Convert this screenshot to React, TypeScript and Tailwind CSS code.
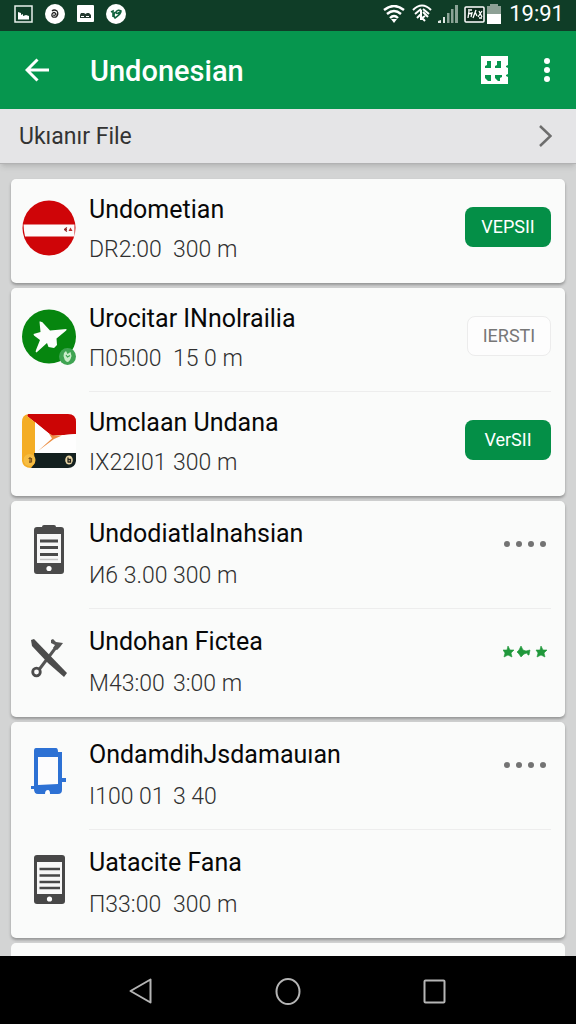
import React from 'react';
import clsx from 'clsx';

interface Row {
  title: string;
  date: string;
  size: string;
  icon: React.ReactNode;
  action?: React.ReactNode;
}

interface Group {
  roomy?: boolean;
  rows: Row[];
}

function RedBadgeIcon() {
  return (
    <svg viewBox="0 0 54 56" className="w-[54px] h-[56px]">
      <ellipse cx="27" cy="28" rx="26.500" ry="27.500" fill="#cf0508" />
      <path d="M1.500 24.500H52.500V36.500H3Q1.500 30 1.500 24.500Z" fill="#fdfbfb" />
      <path d="M45 27.500Q41 29.500 45 31.500M45 29.500H42" stroke="#8f2a2a" strokeWidth="1.300" fill="none" />
      <path d="M46.500 31L48.500 27.500L50.500 31Z" fill="#c02c2c" />
    </svg>
  );
}

function GreenStarIcon() {
  return (
    <svg viewBox="0 0 54 56" className="w-[54px] h-[56px]">
      <circle cx="27" cy="27.500" r="27" fill="#06860f" />
      <path
        d="M17.500 12.500Q20.500 12 22 15L28 21.500L44.500 20Q45 21 43 22.500L34.500 29.500L35 36L32 39L26.500 38L25 34L14.500 43.500Q13 43 14 41L18 31L12 26.500L11.500 25L18.500 23Z"
        fill="#fcfdfc"
      />
      <circle cx="45.500" cy="47.500" r="8.500" fill="#3fa452" />
      <path d="M42 44L44 42L45.500 45L48.500 43L49.500 47Q48 53 45 53Q42 51 41.500 47Z" fill="#c9ecc9" />
      <path d="M44 46L45.500 48L48 46.500" stroke="#3fa452" strokeWidth="1.200" fill="none" />
    </svg>
  );
}

function FlagIcon() {
  return (
    <svg viewBox="0 0 54 54" className="w-[54px] h-[54px]">
      <path d="M6 0H46Q54 0 54 8V20L30 22L5 2Z" fill="#cc0505" />
      <path d="M6 0Q0 1 0 8V47Q1 54 9 54L14 50V9L5 2Z" fill="#f4ad25" />
      <path d="M13 8L30 22L54 20V39H13Z" fill="#fefefe" />
      <path d="M27 19.500L31 21.500L40 21.500L32 25L16 37L30 24.500Z" fill="#ec8f45" />
      <path d="M12 39H54V47Q53 54 46 54H9L13 49Z" fill="#13201f" />
      <circle cx="7.500" cy="46" r="6" fill="#f6bd43" />
      <path d="M8 43V49M6.500 44.500H9.500V48H7" stroke="#80551b" strokeWidth="1.200" fill="none" />
      <ellipse cx="47" cy="46" rx="3.800" ry="4.500" fill="#e9d6a5" />
      <path d="M46 43.500V48.500M46 45.500H48.500V48H46" stroke="#24231c" strokeWidth="1.300" fill="none" />
    </svg>
  );
}

function ClipboardPhoneIcon() {
  return (
    <svg viewBox="0 0 30 50" className="w-[30px] h-[50px]">
      <path d="M8 2Q8 0 10 0H20Q22 0 22 2H27Q30 2 30 5V46Q30 49 27 49H3Q0 49 0 46V5Q0 2 3 2Z" fill="#4a4a4a" />
      <path d="M3 9H27V38H3Z" fill="#f7f7f7" />
      <path d="M6 16H24M6 22.500H24M6 29.500H24" stroke="#4a4a4a" strokeWidth="2.800" />
      <path d="M6 34.500H24" stroke="#c4c4c4" strokeWidth="1.500" />
      <circle cx="15" cy="43.500" r="2.600" fill="#fff" />
    </svg>
  );
}

function PhoneIcon() {
  return (
    <svg viewBox="0 0 31 49" className="w-[31px] h-[49px]">
      <rect width="31" height="49" rx="3" fill="#474747" />
      <path d="M3 7H28V39H3Z" fill="#f7f7f7" />
      <path d="M5.500 14H26M5.500 20.500H26M5.500 27H26M5.500 33H26" stroke="#474747" strokeWidth="2.700" />
      <circle cx="15.500" cy="44" r="2.600" fill="#fff" />
    </svg>
  );
}

function ToolsIcon() {
  return (
    <svg viewBox="0 0 36 40" className="w-9 h-10">
      <path d="M7 33L26 8" stroke="#555" strokeWidth="3" />
      <circle cx="5.500" cy="34" r="3.800" stroke="#4c4c4c" strokeWidth="2.800" fill="#fafafa" />
      <path d="M20 2L22 1L25 4L32 5L29 9L26 12L22 10L24 7L20 5Z" fill="#555" />
      <path d="M0 2L3 1L36 35L33 39L17 25L1 8Z" fill="#4c4c4c" />
    </svg>
  );
}

function TabletIcon() {
  return (
    <svg viewBox="0 0 36 46" className="w-9 h-[46px]">
      <path
        d="M5 0H25Q27 0 27 4H31V30H35V34H31V42Q31 46 27 46H7Q3 46 3 41H0V38H3V3Q3 0 5 0Z"
        fill="#2d71d4"
      />
      <path d="M7 9H27V36L7 37Z" fill="#fcfcfd" />
      <path d="M14 46Q14 42 17 42Q19 42 19 46Z" fill="#fff" />
    </svg>
  );
}

function VersionButton({ label, outlined }: { label: string; outlined?: boolean }) {
  return (
    <button
      className={clsx(
        'h-10 rounded-lg text-lg flex items-center justify-center',
        outlined ? 'w-[84px] bg-[#fdfdfd] border border-[#ececec] text-[#777]' : 'w-[86px] bg-[#048f47] text-white'
      )}
    >
      {label}
    </button>
  );
}

function DotsButton({ label }: { label: string }) {
  return (
    <button aria-label={label} className="h-10 pr-[5px] flex items-center gap-[6px]">
      <span className="w-[6px] h-[6px] rounded-full bg-[#737373]" />
      <span className="w-[6px] h-[6px] rounded-full bg-[#737373]" />
      <span className="w-[6px] h-[6px] rounded-full bg-[#737373]" />
      <span className="w-[6px] h-[6px] rounded-full bg-[#737373]" />
    </button>
  );
}

function StarsButton() {
  return (
    <button aria-label="Rating" className="h-10 pr-1 flex items-center">
      <svg viewBox="0 0 44 12" className="w-11 h-3" fill="#20983b" stroke="#20983b" strokeWidth="0.600">
        <path d="M5 0L7 4L11 4L8 7L9 11L5 9L1 11L2 7L0 4L4 4Z" />
        <path d="M18 0L20 4L23 5L27 4L26 9H25L24 7L21 8L18 11L16 8L14 6L16 4Z" />
        <path d="M38 0L40 4L44 4L41 7L42 11L38 9L34 11L35 7L33 4L37 4Z" />
      </svg>
    </button>
  );
}

const GROUPS: Group[] = [
  {
    rows: [
      { title: 'Undometian', date: 'DR2:00', size: '300 m', icon: <RedBadgeIcon />, action: <VersionButton label="VEPSII" /> },
    ],
  },
  {
    rows: [
      { title: 'Urocitar INnolrailia', date: 'П05!00', size: '15 0 m', icon: <GreenStarIcon />, action: <VersionButton label="IERSTI" outlined /> },
      { title: 'Umclaan Undana', date: 'IX22I01', size: '300 m', icon: <FlagIcon />, action: <VersionButton label="VerSII" /> },
    ],
  },
  {
    roomy: true,
    rows: [
      { title: 'UndodiatlaInahsian', date: 'И6 3.00', size: '300 m', icon: <ClipboardPhoneIcon />, action: <DotsButton label="More about UndodiatlaInahsian" /> },
      { title: 'Undohan Fictea', date: 'M43:00', size: '3:00 m', icon: <ToolsIcon />, action: <StarsButton /> },
    ],
  },
  {
    roomy: true,
    rows: [
      { title: 'OndamdihJsdamauıan', date: 'I100 01', size: '3 40', icon: <TabletIcon />, action: <DotsButton label="More about OndamdihJsdamauıan" /> },
      { title: 'Uatacite Fana', date: 'П33:00', size: '300 m', icon: <PhoneIcon /> },
    ],
  },
];

function StatusBar() {
  return (
    <div className="h-[31px] shrink-0 bg-[#0f3d27] text-white flex items-center justify-between pl-[14px] pr-3 pb-1">
      <div className="flex items-center gap-3">
        <svg viewBox="0 0 19 18" className="w-[19px] h-[18px]">
          <rect x="1" y="1" width="17" height="16" fill="none" stroke="#e9f1ec" strokeWidth="1.500" />
          <path d="M4 7L7 8V10L9 9V11L12 10L15 11V14.500H4Z" fill="#fff" />
        </svg>
        <svg viewBox="0 0 20 20" className="w-5 h-5">
          <circle cx="10" cy="10" r="10" fill="#fff" />
          <path d="M7 7Q9 5 12 7Q14 10 11 13Q6 14 7 10Q9 7 11 10Q10 12 8 11" fill="none" stroke="#222" strokeWidth="1.300" />
        </svg>
        <svg viewBox="0 0 17 17" className="w-[17px] h-[17px]">
          <rect width="17" height="17" rx="1" fill="#fff" />
          <path d="M3 13V10L4 8H7L8.500 9L10 8H12L14 10V13Z" fill="#253a30" />
          <path d="M4 11.500H7M9 11.500H12" stroke="#fff" strokeWidth="1" />
        </svg>
        <svg viewBox="0 0 20 20" className="w-5 h-5">
          <circle cx="10" cy="10" r="10" fill="#fff" />
          <path d="M5 8L7 7V13M9 8Q7 12 9 14Q15 10 15 7Q12 5 10 8Q10 11 14 8" fill="none" stroke="#12633f" strokeWidth="1.600" />
        </svg>
      </div>
      <div className="flex items-center">
        <svg viewBox="0 0 22 18" className="w-[22px] h-[18px] mr-[7px]" fill="none" stroke="#fff" strokeWidth="2.400">
          <path d="M1 5Q11 -3 21 5M4 9Q11 3 18 9M7 13Q11 9 15 13" />
          <path d="M8 14L11 18L14 14Z" fill="#fff" stroke="none" />
        </svg>
        <svg viewBox="0 0 20 19" className="w-5 h-[19px] mr-[5px]" fill="none" stroke="#fff" strokeWidth="2">
          <path d="M1 6Q10 -3 19 6M3 10L9 5M11 5L17 10M5 14L9 10M9 6V16M11 8L16 13M13 12L10 14L13 17" />
        </svg>
        <svg viewBox="0 0 21 19" className="w-[21px] h-[19px] mr-[6px]">
          <path d="M1 19V17L4 16V19ZM6 19V13H8V19Z" fill="#dfe8e3" />
          <path d="M10 19V9H12.500V19ZM14 19V5H16.500V19ZM18 19V1H21V19Z" fill="#8ba396" />
        </svg>
        <svg viewBox="0 0 38 20" className="w-[38px] h-5 mr-[7px]">
          <rect x="1" y="3" width="19" height="15" rx="1" fill="#0c2b1c" stroke="#fff" strokeWidth="1.500" />
          <path d="M4 6H8M5 7L4 14M4 10L8 9L7 13M12 6L9 14M11 8L13 12M18 7L14 13M15 7L18 13M15 14H18" stroke="#fff" strokeWidth="1.300" fill="none" />
          <path d="M23 2H26V0H34V2H37V10H23Z" fill="#8da095" />
          <path d="M23 10H37V20H23Z" fill="#fff" />
        </svg>
        <span className="text-[22px] leading-6">19:91</span>
      </div>
    </div>
  );
}

function AppBar() {
  return (
    <header className="h-[78px] shrink-0 bg-[#06964e] text-white flex items-center pl-[25px] pr-[26px]">
      <button aria-label="Back" className="mr-10">
        <svg viewBox="0 0 25 24" className="w-[25px] h-6" fill="none" stroke="currentColor" strokeWidth="3">
          <path d="M24 12H2M12.500 1.500L2 12L12.500 22.500" />
        </svg>
      </button>
      <h1 className="flex-1 text-[29px] leading-8 pt-px font-medium">Undonesian</h1>
      <button aria-label="Grid view" className="mr-9">
        <svg viewBox="0 0 27 28" className="w-[27px] h-7">
          <path d="M0 0H27V9L25 10V11L27 12V18L25 19V20L27 21V28H0Z" fill="#fff" />
          <path
            d="M6 5H10V12H4V10L6 9ZM16 5H20V12H14V10L16 9ZM4 19H10V25H7L4 22ZM14 19H21V21L19 22V25H17L14 22Z"
            fill="#06964e"
          />
        </svg>
      </button>
      <button aria-label="Menu" className="flex flex-col gap-[3px]">
        <span className="w-[6px] h-[6px] rounded-full bg-white" />
        <span className="w-[6px] h-[6px] rounded-full bg-white" />
        <span className="w-[6px] h-[6px] rounded-full bg-white" />
      </button>
    </header>
  );
}

function ListRow({ row, roomy, last }: { row: Row; roomy?: boolean; last: boolean }) {
  return (
    <li className={clsx('flex items-start', roomy ? 'h-[108px]' : 'h-[104px]')}>
      <div className="w-[54px] h-[54px] mt-[22px] mr-[13px] shrink-0 flex items-center justify-center">{row.icon}</div>
      <div className={clsx('h-full flex-1 flex items-start justify-between', !last && 'border-b border-[#ededed]')}>
        <div className={clsx('flex flex-col', roomy ? 'pt-[17px] gap-[10px]' : 'pt-[15px] gap-2')}>
          <h2 className="text-[25px] leading-8 text-[#080808]">{row.title}</h2>
          <p className="flex text-[23px] leading-8 font-light text-[#303030]">
            <span className="w-[84px]">{row.date}</span>
            <span>{row.size}</span>
          </p>
        </div>
        {row.action && <div className={roomy ? 'pt-[23px]' : 'pt-7'}>{row.action}</div>}
      </div>
    </li>
  );
}

export default function App() {
  return (
    <div className="h-dvh flex flex-col overflow-hidden bg-[#d3d4d4] font-[Roboto,'Noto_Sans',sans-serif]">
      <StatusBar />
      <AppBar />

      {/* Section header */}
      <a
        href="#file"
        className="h-[55px] shrink-0 bg-[#e5e5e7] border-b border-[#b2b2b3] shadow-md flex items-center justify-between pl-[19px] pr-6"
      >
        <span className="text-[23px] leading-8 pt-0.5 text-[#333]">Ukıanır File</span>
        <svg viewBox="0 0 13 22" className="w-[13px] h-[22px]" fill="none" stroke="#6d6d6d" strokeWidth="2.500">
          <path d="M1 1L11.500 11L1 21" />
        </svg>
      </a>

      {/* Cards, the last one runs under the navigation bar */}
      <main className="flex-1 min-h-0 overflow-hidden px-[11px] pt-[15px] flex flex-col gap-[5px]">
        {GROUPS.map((group) => (
          <ul
            key={group.rows[0].title}
            className="shrink-0 bg-[#fafbfa] rounded-[5px] shadow-[0_2px_3px_rgba(0,0,0,0.3)] pl-[11px] pr-[14px]"
          >
            {group.rows.map((row, i) => (
              <ListRow key={row.title} row={row} roomy={group.roomy} last={i === group.rows.length - 1} />
            ))}
          </ul>
        ))}
        <div className="flex-1 bg-[#fafbfa] rounded-t-[5px]" />
      </main>

      <nav className="h-[68px] shrink-0 bg-black flex items-center justify-between pl-[129px] pr-[130px] pt-0.5 text-[#b5b5b5]">
        <button aria-label="Back">
          <svg viewBox="0 0 23 26" className="w-[23px] h-[26px]" fill="none" stroke="currentColor" strokeWidth="2">
            <path d="M21.500 1.500V24.500L1.500 13Z" strokeLinejoin="round" />
          </svg>
        </button>
        <button aria-label="Home">
          <svg viewBox="0 0 26 27" className="w-[26px] h-[27px]" fill="none" stroke="currentColor" strokeWidth="2">
            <ellipse cx="13" cy="13.500" rx="11.500" ry="12.500" />
          </svg>
        </button>
        <button aria-label="Recent apps">
          <svg viewBox="0 0 23 25" className="w-[23px] h-[25px]" fill="none" stroke="currentColor" strokeWidth="2">
            <rect x="1.500" y="1.500" width="20" height="22" rx="1" />
          </svg>
        </button>
      </nav>
    </div>
  );
}
